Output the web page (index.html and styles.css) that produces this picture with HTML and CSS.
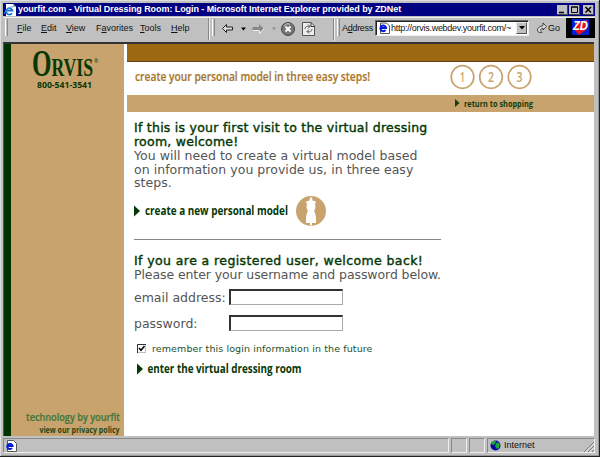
FILE: index.html
```html
<!DOCTYPE html>
<html lang="en">
<head>
<meta charset="utf-8">
<title>yourfit.com - Virtual Dressing Room: Login</title>
<link rel="stylesheet" href="styles.css">
</head>
<body>
<div class="window">
  <header class="titlebar">
    <svg class="ie" width="12" height="12" viewBox="0 0 12 12"><path d="M2 0h7l3 3v9H2z" fill="#fff"/><path d="M9 0v3h3" fill="#aaa"/><path d="M8 9.2A3.2 3.2 0 1 1 8.500 6.700H2.500" fill="none" stroke="#1674d8" stroke-width="1.800"/><path d="M1 10C-1 9 5 2 9 3" fill="none" stroke="#49a7ef"/></svg>
    <span class="title">yourfit.com - Virtual Dressing Room: Login - Microsoft Internet Explorer provided by ZDNet</span>
    <div class="controls">
      <svg width="11" height="10" viewBox="0 0 11 10"><path d="M0 0h11v10H0z" fill="#c0c0c0"/><path d="M0 9.500h10.500V0" fill="none" stroke="#444"/><path d="M2 7.500h5" stroke="#000" stroke-width="1.500"/></svg>
      <svg width="11" height="10" viewBox="0 0 11 10"><path d="M0 0h11v10H0z" fill="#c0c0c0"/><path d="M0 9.500h10.500V0" fill="none" stroke="#444"/><path d="M2.500 2h6v5.500h-6zM2 2h7" fill="none" stroke="#000"/></svg>
      <svg class="close" width="11" height="10" viewBox="0 0 11 10"><path d="M0 0h11v10H0z" fill="#c0c0c0"/><path d="M0 9.500h10.500V0" fill="none" stroke="#444"/><path d="M2.500 2l5.500 5.500M8 2L2.500 7.500" stroke="#000" stroke-width="1.500"/></svg>
    </div>
  </header>
  <div class="toolbar">
    <nav class="menu">
      <i class="grip"></i>
      <span class="m-file"><u>F</u>ile</span><span class="m-edit"><u>E</u>dit</span><span class="m-view"><u>V</u>iew</span><span class="m-fav">F<u>a</u>vorites</span><span class="m-tools"><u>T</u>ools</span><span class="m-help"><u>H</u>elp</span>
    </nav>
    <div class="buttons">
      <i class="grip"></i>
      <svg width="120" height="22" viewBox="0 0 120 22">
        <path d="M7.500 10.500l4-4v2.500h6v3h-6v2.500z" fill="#ddd" stroke="#222"/>
        <path d="M26 9.500h5l-2.500 3z" fill="#000"/>
        <path d="M48.500 10.500l-4.500-4.500v3h-6.500v3h6.500v3z" fill="#888"/><path d="M38 12.500h6.500v3l4.500-4.500" fill="none" stroke="#eee"/>
        <path d="M57 9.500h4l-2 2.500z" fill="#888"/>
        <circle cx="73" cy="11" r="6.500" fill="#777" stroke="#444"/><path d="M69 8a5 5 0 0 1 6-2" stroke="#ccc" fill="none"/><path d="M70.500 8.500l5 5m0-5l-5 5" stroke="#fff" stroke-width="1.800"/>
        <path d="M87.500 4.500h8.500l3.500 3.500v9.500h-12z" fill="#eee" stroke="#555"/><path d="M96 4.500v4h3.500" fill="none" stroke="#333"/><path d="M90 11c0-3 3-3 5-2.500m-2-2l2 2-2 2M97 11c0 3-3 3-5 2.500m2 2l-2-2 2-2" fill="none" stroke="#555"/>
      </svg>
    </div>
    <div class="address">
      <i class="grip"></i>
      <label class="addr-label">A<u>d</u>dress</label>
      <div class="addr-box">
        <svg width="12" height="12" viewBox="0 0 12 12"><path d="M2.500 1h6l3 3v7.500h-9z" fill="#fff" stroke="#555"/><path d="M7.500 8A2.800 2.800 0 1 1 8 6H3" fill="none" stroke="#0018df" stroke-width="2"/></svg>
        <span class="url">http://orvis.webdev.yourfit.com/~</span>
        <i class="drop"><svg width="6" height="4" viewBox="0 0 6 4"><path d="M0 0h6L3 3.500z"/></svg></i>
      </div>
      <svg class="go-icon" width="10" height="12" viewBox="0 0 10 12"><path d="M5 10.500C0 11.500-1 7 2.500 5L6 3.500V1l3.500 3.500L6 8V6C3 7 3 8.500 5 10.500z" fill="#ddd" stroke="#333" stroke-width=".9"/></svg>
      <span class="go">Go</span>
    </div>
    <svg class="zd" width="29" height="20" viewBox="0 0 29 20"><path d="M0 0h29v20H0z"/><path d="M6 1h17v16H6z" fill="#001ed4"/><path d="M9 5l12-3-1 10-7 5-4-4z" fill="#e51420"/><text x="7" y="12" textLength="15" lengthAdjust="spacingAndGlyphs">ZD</text></svg>
  </div>
  <div class="page">
    <aside class="side">
      <svg class="logo" width="68" height="46" viewBox="0 0 68 46"><text class="orvis" x="0" y="25" textLength="61" lengthAdjust="spacingAndGlyphs"><tspan class="orvis-o">O</tspan>RVIS</text><text class="reg" x="62" y="12">®</text><text class="phone" x="5" y="37" textLength="55" lengthAdjust="spacingAndGlyphs">800-541-3541</text></svg>
      <svg class="credits" width="98" height="26" viewBox="0 0 98 26"><text class="tech" x="2" y="12" textLength="94" lengthAdjust="spacingAndGlyphs">technology by yourfit</text><text class="privacy" x="15.500" y="23.500" textLength="80" lengthAdjust="spacingAndGlyphs">view our privacy policy</text></svg>
    </aside>
    <main class="main">
      <div class="brown"></div>
      <div class="steps">
        <svg class="tagline" width="250" height="20" viewBox="0 0 250 20"><text x="0" y="14" textLength="235" lengthAdjust="spacingAndGlyphs">create your personal model in three easy steps!</text></svg>
        <svg class="nums" width="84" height="26" viewBox="0 0 84 26"><g fill="none" stroke="#c9a36d" stroke-width="1.700"><circle cx="12.500" cy="13" r="11.300"/><circle cx="41" cy="13" r="11.300"/><circle cx="69.500" cy="13" r="11.300"/></g><text x="10" y="18" textLength="5" lengthAdjust="spacingAndGlyphs">1</text><text x="38" y="18" textLength="6" lengthAdjust="spacingAndGlyphs">2</text><text x="66.500" y="18" textLength="6" lengthAdjust="spacingAndGlyphs">3</text></svg>
      </div>
      <div class="return"><svg width="80" height="17" viewBox="0 0 80 17"><path d="M0 4v8l4.500-4z"/><text x="9" y="11.500" textLength="69" lengthAdjust="spacingAndGlyphs">return to shopping</text></svg></div>
      <section class="content">
        <h2 class="h-first">If this is your first visit to the virtual dressing<br>room, welcome!</h2>
        <p class="copy">You will need to create a virtual model based<br>on information you provide us, in three easy<br>steps.</p>
        <a class="create">
          <svg width="162" height="20" viewBox="0 0 162 20"><path d="M0 4.500v11l6-5.500z"/><text x="11" y="14" textLength="143" lengthAdjust="spacingAndGlyphs">create a new personal model</text></svg>
          <svg width="30" height="30" viewBox="0 0 30 30"><circle cx="15" cy="15" r="15" fill="#c9a36d"/><path d="M14 1.500h2L16.500 4.500 20 5.500 19 8.500 19.500 11 18.300 15 20 20.500V27H16v2.500H14V27H10V20.500L11.700 15 10.500 11 11 8.500 10 5.500 13.500 4.500z" fill="#fff"/></svg>
        </a>
        <hr>
        <h2 class="h-back">If you are a registered user, welcome back!</h2>
        <p class="copy enter-copy">Please enter your username and password below.</p>
        <div class="field"><label>email address:</label><input type="text"></div>
        <div class="field second"><label>password:</label><input type="password"></div>
        <div class="remember"><svg width="9" height="9" viewBox="0 0 9 9"><path d="M0 0h9v9H0z" fill="#c0c0c0"/><path d="M1 1h7v7H1z" fill="#fff"/><path d="M.5 9V.5H9" fill="none" stroke="#333"/><path d="M2 4l2 2.300L7.500 2" fill="none" stroke="#000" stroke-width="1.500"/></svg><span>remember this login information in the future</span></div>
        <a class="enter"><svg width="170" height="20" viewBox="0 0 170 20"><path d="M0 4.500v11l6-5.500z"/><text x="10.500" y="14" textLength="154" lengthAdjust="spacingAndGlyphs">enter the virtual dressing room</text></svg></a>
      </section>
    </main>
  </div>
  <footer class="status">
    <div class="pane wide"><svg width="12" height="12" viewBox="0 0 12 12"><path d="M2.500.5h6l3 3v8h-9z" fill="#fff" stroke="#555"/><path d="M7 8A2.600 2.600 0 1 1 7.500 6H3" fill="none" stroke="#0018df" stroke-width="2"/></svg></div>
    <div class="pane small"></div>
    <div class="pane small"></div>
    <div class="pane zone"><svg width="11" height="11" viewBox="0 0 11 11"><circle cx="5.500" cy="5.500" r="5" fill="#0808a0"/><path d="M1 4l2-3h3L5 4 3 5zM7 2l3 2-1 4-2 1-2-3z" fill="#1aab32"/></svg><span>Internet</span><svg class="resize" width="10" height="10" viewBox="0 0 10 10"><path d="M0 10L10 0M4 10l6-6M8 10l2-2" stroke="#777"/><path d="M1.500 10L10 1.500M5.500 10L10 5.500" stroke="#fff" stroke-width=".7"/></svg></div>
  </footer>
</div>
</body>
</html>
```

FILE: styles.css
```css
* { box-sizing: border-box; }
body { margin: 0; overflow: hidden; background: #c0c0c0; }
svg { display: block; flex: none; overflow: visible; }
svg text { font-family: "Open Sans", "Noto Sans", sans-serif; }

.window { width: 600px; height: 457px; padding: 3px 4px 0 3px; display: flex; flex-direction: column; background: #c0c0c0; border-right: 1px solid #222; border-bottom: 1px solid #222; box-shadow: inset 1px 1px #ddd, inset -1px -1px #999; }

.titlebar { height: 13px; display: flex; align-items: center; padding-left: 1px; background: #000080; color: #fff; }
.title { width: 390px; margin-left: 2px; font: bold 9px/13px "Liberation Sans", sans-serif; letter-spacing: -.07px; white-space: nowrap; }
.controls { display: flex; margin-left: auto; padding-right: 1px; gap: 1px; }
.close { margin-left: 2px; }

.toolbar { height: 24px; margin-top: 1px; display: flex; border-top: 1px solid #eee; font: 9px/20px "Liberation Sans", sans-serif; color: #111; }
.toolbar u { text-underline-offset: 1px; }
.grip { width: 3px; height: 17px; margin-top: 1px; flex: none; border-left: 1px solid #fff; border-right: 1px solid #888; }
.menu { width: 206px; height: 22px; display: flex; padding-left: 2px; border-right: 1px solid #888; }
.menu span { white-space: nowrap; }
.m-file { width: 24px; margin-left: 9px; }
.m-edit { width: 25px; }
.m-view { width: 30px; }
.m-fav { width: 44px; }
.m-tools { width: 31px; }
.buttons { width: 125px; height: 22px; display: flex; padding-left: 2px; border-left: 1px solid #eee; border-right: 1px solid #888; }
.buttons svg { margin: 0; }
.address { flex: 1; display: flex; padding-left: 2px; border-left: 1px solid #eee; }
.addr-label { width: 33px; margin-left: 2px; letter-spacing: -.3px; }
.addr-box { width: 154px; height: 16px; margin: 2px 0 0; display: flex; align-items: center; border: 1px solid #666; border-right-color: #eee; border-bottom-color: #eee; background: #fff; box-shadow: inset 1px 1px #222; padding-left: 2px; }
.url { margin-left: 1px; width: 122px; white-space: nowrap; letter-spacing: -.26px; }
.drop { width: 11px; height: 12px; margin-left: auto; margin-right: 1px; display: grid; place-items: center; background: #c0c0c0; border: 1px solid #eee; border-right-color: #555; border-bottom-color: #555; }
.go-icon { margin: 4px 1px 0 8px; }
.zd { margin-left: auto; }
.zd text { font: italic bold 12px "Liberation Sans", sans-serif; fill: #fff; }

.page { height: 394px; margin: 1px 1px 0 0; display: flex; background: #fff; border-top: 2px solid #333; border-left: 1px solid #555; }
.side { width: 120px; display: flex; flex-direction: column; justify-content: space-between; background: #c9a36d; border-left: 7px solid #003300; fill: #063806; }
.logo { margin: 7px 0 0 21px; }
.logo .orvis { font: bold 26px "Liberation Serif", serif; }
.logo .orvis-o { font-size: 37px; }
.logo .reg { font-size: 5px; }
.logo .phone { font-size: 8.5px; font-weight: 700; }
.credits { margin: 0 0 1px 13px; }
.credits .tech { font-size: 10.5px; font-weight: 600; fill: #43773b; stroke: #43773b; stroke-width: .2px; }
.credits .privacy { font-size: 8.5px; font-weight: 700; fill: #244713; }

.main { flex: 1; margin-left: 3px; }
.brown { height: 18px; background: #9c6912; border-bottom: 1px solid #664012; }
.steps { height: 33px; display: flex; }
.tagline { margin: 5px 0 0 8px; }
.tagline text { font-size: 13px; font-weight: 600; fill: #a8762b; stroke: #a8762b; stroke-width: .2px; }
.nums { margin: 2px 0 0 65px; }
.nums text { font-size: 14px; font-weight: 600; fill: #c9a36d; }
.return { height: 17px; padding-left: 328px; background: #c9a36d; fill: #173b09; }
.return text { font-size: 9.5px; font-weight: 700; }

.content { padding: 9px 0 0 7px; font-family: "DejaVu Sans", sans-serif; white-space: nowrap; fill: #063806; }
.content h2 { margin: 0; font-size: 12.5px; line-height: 14px; font-weight: 400; color: #063806; -webkit-text-stroke: .4px #063806; }
.content .h-first { letter-spacing: .25px; }
.copy { margin: 0; font-size: 12.5px; line-height: 13.6px; color: #555; letter-spacing: .04px; }
.content .enter-copy { letter-spacing: -.09px; }
.create { height: 30px; margin-top: 6px; display: flex; align-items: center; }
.create text, .enter text { font-size: 12px; font-weight: 700; }
.content hr { width: 307px; height: 1px; margin: 13px 0 0; border: 0; background: #888; }
.content .h-back { margin-top: 14px; letter-spacing: .4px; }
.field { height: 16px; margin-top: 8px; display: flex; align-items: center; font-size: 12.5px; color: #555; }
.field label { width: 95px; }
.field input { width: 114px; height: 16px; padding: 0 2px; border: 1px solid #aaa; border-top: 2px solid #333; border-left: 2px solid #333; background: #fff; }
.second { margin-top: 10px; }
.remember { height: 14px; margin: 10px 0 0 3px; display: flex; align-items: center; font-size: 9.5px; letter-spacing: .1px; color: #24502a; }
.remember span { margin-left: 6px; }
.enter { display: block; margin: 4px 0 0 3px; }

.status { height: 16px; margin-top: 2px; display: flex; gap: 2px; font: 9px/13px "Liberation Sans", sans-serif; color: #111; }
.pane { height: 15px; display: flex; align-items: center; border: 1px solid #888; border-right-color: #eee; border-bottom-color: #eee; }
.wide { width: 446px; padding-left: 1px; }
.small { width: 16px; }
.zone { flex: 1; padding-left: 2px; }
.zone span { margin-left: 3px; }
.resize { margin-left: auto; margin-top: 3px; }
```
